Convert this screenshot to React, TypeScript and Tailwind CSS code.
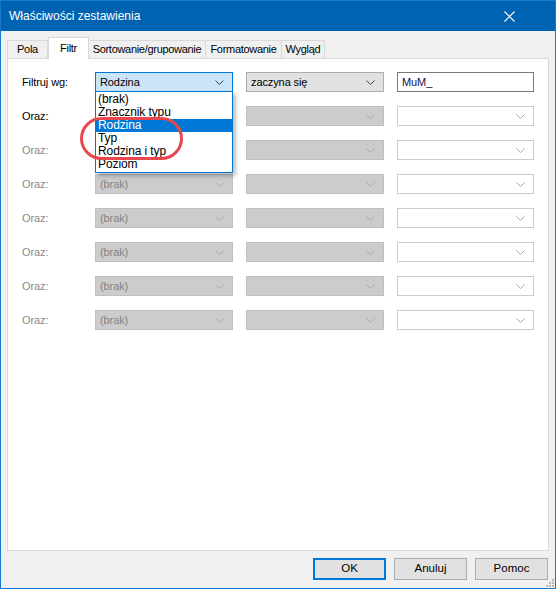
import React from "react";

const font = "font-['Liberation_Sans',Arial,sans-serif]";

function Chevron({ color = "#333" }: { color?: string }) {
  return (
    <svg width="9" height="5" viewBox="0 0 9 5" className="shrink-0">
      <polyline points="0.5,0.5 4.5,4.5 8.5,0.5" fill="none" stroke={color} strokeWidth="1" />
    </svg>
  );
}

function Combo({
  text,
  variant,
}: {
  text?: string;
  variant: "active" | "normal" | "disabled" | "editDisabled";
}) {
  const styles = {
    active: "bg-[#cce4f7] border-[#0078d7] text-black",
    normal: "bg-[#e1e1e1] border-[#adadad] text-black",
    disabled: "bg-[#cccccc] border-[#bfbfbf] text-[#838383]",
    editDisabled: "bg-white border-[#cccccc] text-[#838383]",
  }[variant];
  const chev = variant === "active" || variant === "normal" ? "#444" : "#a8a8a8";
  return (
    <div className={`flex h-[20px] w-[138px] items-center justify-between border pl-[4px] pr-[8px] ${styles}`}>
      <span className="leading-none">{text}</span>
      <Chevron color={chev} />
    </div>
  );
}

const listItems = ["(brak)", "Znacznik typu", "Rodzina", "Typ", "Rodzina i typ", "Poziom"];

const tabBase =
  "flex h-[18px] items-center justify-center whitespace-nowrap border border-b-0 border-[#d9d9d9] bg-[#f0f0f0]";

export default function App() {
  const rows = Array.from({ length: 7 });
  return (
    <div className={`flex h-[589px] w-[556px] flex-col border border-[#1979ca] bg-[#f0f0f0] ${font}`}>
      {/* Title bar */}
      <div className="flex h-[30px] shrink-0 items-center justify-between bg-[#0063b1] pl-[8px] pr-[40px] text-white">
        <span className="text-[12px]">Właściwości zestawienia</span>
        <svg width="11" height="11" viewBox="0 0 11 11">
          <path d="M0.5 0.5 L10.5 10.5 M10.5 0.5 L0.5 10.5" stroke="white" strokeWidth="1.1" />
        </svg>
      </div>

      {/* Tabs */}
      <div className="flex h-[27px] shrink-0 items-end pl-[6px] text-[11px] tracking-[-0.3px] text-black">
        <div className={`${tabBase} w-[41px]`}>Pola</div>
        <div className="relative z-10 -mb-px flex h-[22px] w-[41px] items-start justify-center border border-b-0 border-[#d9d9d9] bg-white pt-[2px]">
          Filtr
        </div>
        <div className={`${tabBase} w-[117px] border-l-0`}>Sortowanie/grupowanie</div>
        <div className={`${tabBase} w-[76px] border-l-0`}>Formatowanie</div>
        <div className={`${tabBase} w-[43px] border-l-0`}>Wygląd</div>
      </div>

      {/* Panel */}
      <div className="mx-[6px] flex h-[493px] shrink-0 flex-col gap-[14px] border border-[#d9d9d9] bg-white pl-[14px] pt-[13px] text-[11px] tracking-[-0.1px]">
        <div className="flex items-center">
          <span className="w-[73px] text-black">Filtruj wg:</span>
          <div className="relative">
            <Combo text="Rodzina" variant="active" />
            {/* open list */}
            <div className="absolute left-0 top-[19px] z-20 w-[138px] border border-[#0078d7] bg-white py-[1px] shadow-[3px_3px_4px_rgba(0,0,0,0.25)]">
              {listItems.map((it) => (
                <div
                  key={it}
                  className={`h-[13px] overflow-hidden pl-[2px] text-[12px] leading-[13px] ${it === "Rodzina" ? "bg-[#0078d7] text-white" : "text-black"}`}
                >
                  {it}
                </div>
              ))}
            </div>
            {/* annotation */}
            <div className="absolute left-[-15px] top-[45px] z-30 h-[43px] w-[103px] rounded-[22px] border-[3px] border-[#e8484d]" />
          </div>
          <div className="ml-[13px]">
            <Combo text="zaczyna się" variant="normal" />
          </div>
          <div className="ml-[13px] flex h-[20px] w-[137px] items-center border border-[#7a7a7a] bg-white pl-[4px] text-[#101050]">
            MuM_
          </div>
        </div>
        {rows.map((_, i) => (
          <div key={i} className="flex items-center">
            <span className={`w-[73px] ${i === 0 ? "text-black" : "text-[#8a8a8a]"}`}>Oraz:</span>
            {/* first two are covered by the open list */}
            <Combo text={i < 2 ? undefined : "(brak)"} variant="disabled" />
            <div className="ml-[13px]">
              <Combo variant="disabled" />
            </div>
            <div className="ml-[13px]">
              <div className="flex h-[20px] w-[137px] items-center justify-end border border-[#cccccc] bg-white pr-[8px]">
                <Chevron color="#a8a8a8" />
              </div>
            </div>
          </div>
        ))}
      </div>

      {/* Buttons */}
      <div className="relative flex flex-1 items-start justify-end gap-[8px] pr-[7px] pt-[7px] text-[11.5px]">
        <button className="h-[22px] w-[73px] border-2 border-[#0078d7] bg-[#e1e1e1] text-black">OK</button>
        <button className="h-[22px] w-[73px] border border-[#adadad] bg-[#e1e1e1] text-black">Anuluj</button>
        <button className="h-[22px] w-[73px] border border-[#adadad] bg-[#e1e1e1] text-black">Pomoc</button>
        <svg width="8" height="8" viewBox="0 0 8 8" className="absolute bottom-[1px] right-[1px]">
          {[
            [6, 0],
            [6, 3],
            [3, 3],
            [6, 6],
            [3, 6],
            [0, 6],
          ].map(([x, y]) => (
            <rect key={`${x}-${y}`} x={x} y={y} width="2" height="2" fill="#b8b8b8" />
          ))}
        </svg>
      </div>
    </div>
  );
}
